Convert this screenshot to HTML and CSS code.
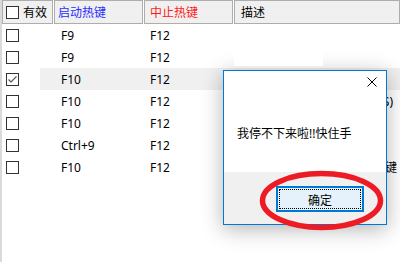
FILE: index.html
```html
<!DOCTYPE html>
<html>
<head>
  <title>热键列表</title>
  <meta charset="utf-8">
  <link rel="stylesheet" href="styles.css">
</head>
<body>
  <div class="list">
    <div class="head">
      <div class="hcell h1"><span class="box"></span>有效</div>
      <div class="hcell h2">启动热键</div>
      <div class="hcell h3">中止热键</div>
      <div class="hcell h4">描述</div>
    </div>

    <div class="row">
      <div class="c1"><span class="box"></span></div>
      <div class="c1b"></div>
      <div class="c2">F9</div>
      <div class="c3">F12</div>
      <div class="c4"></div>
    </div>
    <div class="row">
      <div class="c1"><span class="box"></span></div>
      <div class="c1b"></div>
      <div class="c2">F9</div>
      <div class="c3">F12</div>
      <div class="c4"></div>
    </div>
    <div class="row sel">
      <div class="c1">
        <span class="box">
          <svg width="11" height="11" viewBox="0 0 11 11"><path d="M1.5 5.5 L4 8 L9.5 2.5" fill="none" stroke="#555" stroke-width="1.1"/></svg>
        </span>
      </div>
      <div class="c1b"></div>
      <div class="c2">F10</div>
      <div class="c3">F12</div>
      <div class="c4"></div>
    </div>
    <div class="row">
      <div class="c1"><span class="box"></span></div>
      <div class="c1b"></div>
      <div class="c2">F10</div>
      <div class="c3">F12</div>
      <div class="c4">按热键后开始自动连续按&nbsp; (S)</div>
    </div>
    <div class="row">
      <div class="c1"><span class="box"></span></div>
      <div class="c1b"></div>
      <div class="c2">F10</div>
      <div class="c3">F12</div>
      <div class="c4"></div>
    </div>
    <div class="row">
      <div class="c1"><span class="box"></span></div>
      <div class="c1b"></div>
      <div class="c2">Ctrl+9</div>
      <div class="c3">F12</div>
      <div class="c4"></div>
    </div>
    <div class="row">
      <div class="c1"><span class="box"></span></div>
      <div class="c1b"></div>
      <div class="c2">F10</div>
      <div class="c3">F12</div>
      <div class="c4">循环按下并松开一个指定的键</div>
    </div>
  </div>

  <div class="editbox"></div>

  <div class="dlg">
    <div class="dlg-body">
      <div class="dlg-top">
        <svg class="close" width="10" height="10" viewBox="0 0 10 10"><path d="M0.5 0.5 L9.5 9.5 M9.5 0.5 L0.5 9.5" stroke="#000" stroke-width="1"/></svg>
      </div>
      <div class="dlg-msg">我停不下来啦!!快住手</div>
    </div>
    <div class="dlg-foot">
      <button class="ok">确定</button>
    </div>
  </div>

  <svg class="mark" width="128" height="64" viewBox="0 0 128 64">
    <ellipse cx="63.5" cy="31.5" rx="59" ry="27" fill="none" stroke="#ed1c24" stroke-width="5.5"/>
  </svg>
</body>
</html>
```

FILE: styles.css
```css
body {
  margin: 0;
  background-color: #fff;
  font-family: "Noto Sans", "Noto Sans CJK SC", sans-serif;
  font-size: 12px;
  color: #000;
  overflow: hidden;
}

.list {
  height: 262px;
  border-left: 2px solid #dadada;
}

.head {
  display: flex;
  gap: 1px;
  height: 24px;
}

.hcell {
  display: flex;
  align-items: center;
  box-sizing: border-box;
  height: 24px;
  border: 1px solid #adadad;
  background-color: #f0f0f0;
  padding-left: 3px;
  white-space: nowrap;
}

.h1 { width: 51px; }
.h2 { width: 89px; color: #2b2bff; }
.h3 { width: 89px; color: #ff1a1a; padding-left: 5px; }
.h4 { flex: 1; padding-left: 6px; }

.box {
  display: inline-flex;
  align-items: center;
  justify-content: center;
  box-sizing: border-box;
  width: 13px;
  height: 13px;
  border: 1px solid #333;
  background-color: #fff;
  margin-right: 4px;
}

.row {
  display: flex;
  height: 22px;
  align-items: stretch;
}

.row > div {
  display: flex;
  align-items: center;
  white-space: nowrap;
}

.c1 { width: 38px; padding-left: 4px; box-sizing: border-box; }
.c1b { width: 14px; }
.c2 { width: 90px; padding-left: 7px; box-sizing: border-box; }
.c3 { width: 90px; padding-left: 6px; box-sizing: border-box; }
.c4 { flex: 1; padding-left: 7px; overflow: hidden; }

.sel .c1b,
.sel .c2,
.sel .c3,
.sel .c4 {
  background-color: #f0f0f0;
}

.editbox {
  position: absolute;
  left: 234px;
  top: 46px;
  width: 89px;
  height: 20px;
  background-color: #fff;
  z-index: 2;
}

.dlg {
  position: absolute;
  left: 223px;
  top: 70px;
  width: 164px;
  height: 155px;
  box-sizing: border-box;
  border: 1px solid #0078d7;
  background-color: #fff;
  display: flex;
  flex-direction: column;
  box-shadow: 0 4px 20px rgba(0, 0, 0, 0.3);
  z-index: 1;
}

.dlg-body {
  height: 101px;
  padding-top: 6px;
  box-sizing: border-box;
}

.dlg-top {
  display: flex;
  justify-content: flex-end;
  padding-right: 9px;
  height: 11px;
}

.dlg-msg {
  margin-top: 38px;
  padding-left: 13px;
  line-height: 16px;
  white-space: nowrap;
}

.dlg-foot {
  flex: 1;
  background-color: #f0f0f0;
  display: flex;
  justify-content: flex-end;
  align-items: flex-start;
  padding: 14px 22px 0 0;
}

.ok {
  position: relative;
  width: 88px;
  height: 26px;
  box-sizing: border-box;
  border: 2px solid #0078d7;
  background-color: #e5f1fb;
  font-family: "Noto Sans CJK SC", sans-serif;
  font-size: 12px;
  color: #000;
  padding: 0;
}

.ok::after {
  content: "";
  position: absolute;
  left: 1px;
  top: 1px;
  right: 1px;
  bottom: 1px;
  border: 1px dotted #000;
}

.mark {
  position: absolute;
  left: 258px;
  top: 169px;
  z-index: 3;
}
```
